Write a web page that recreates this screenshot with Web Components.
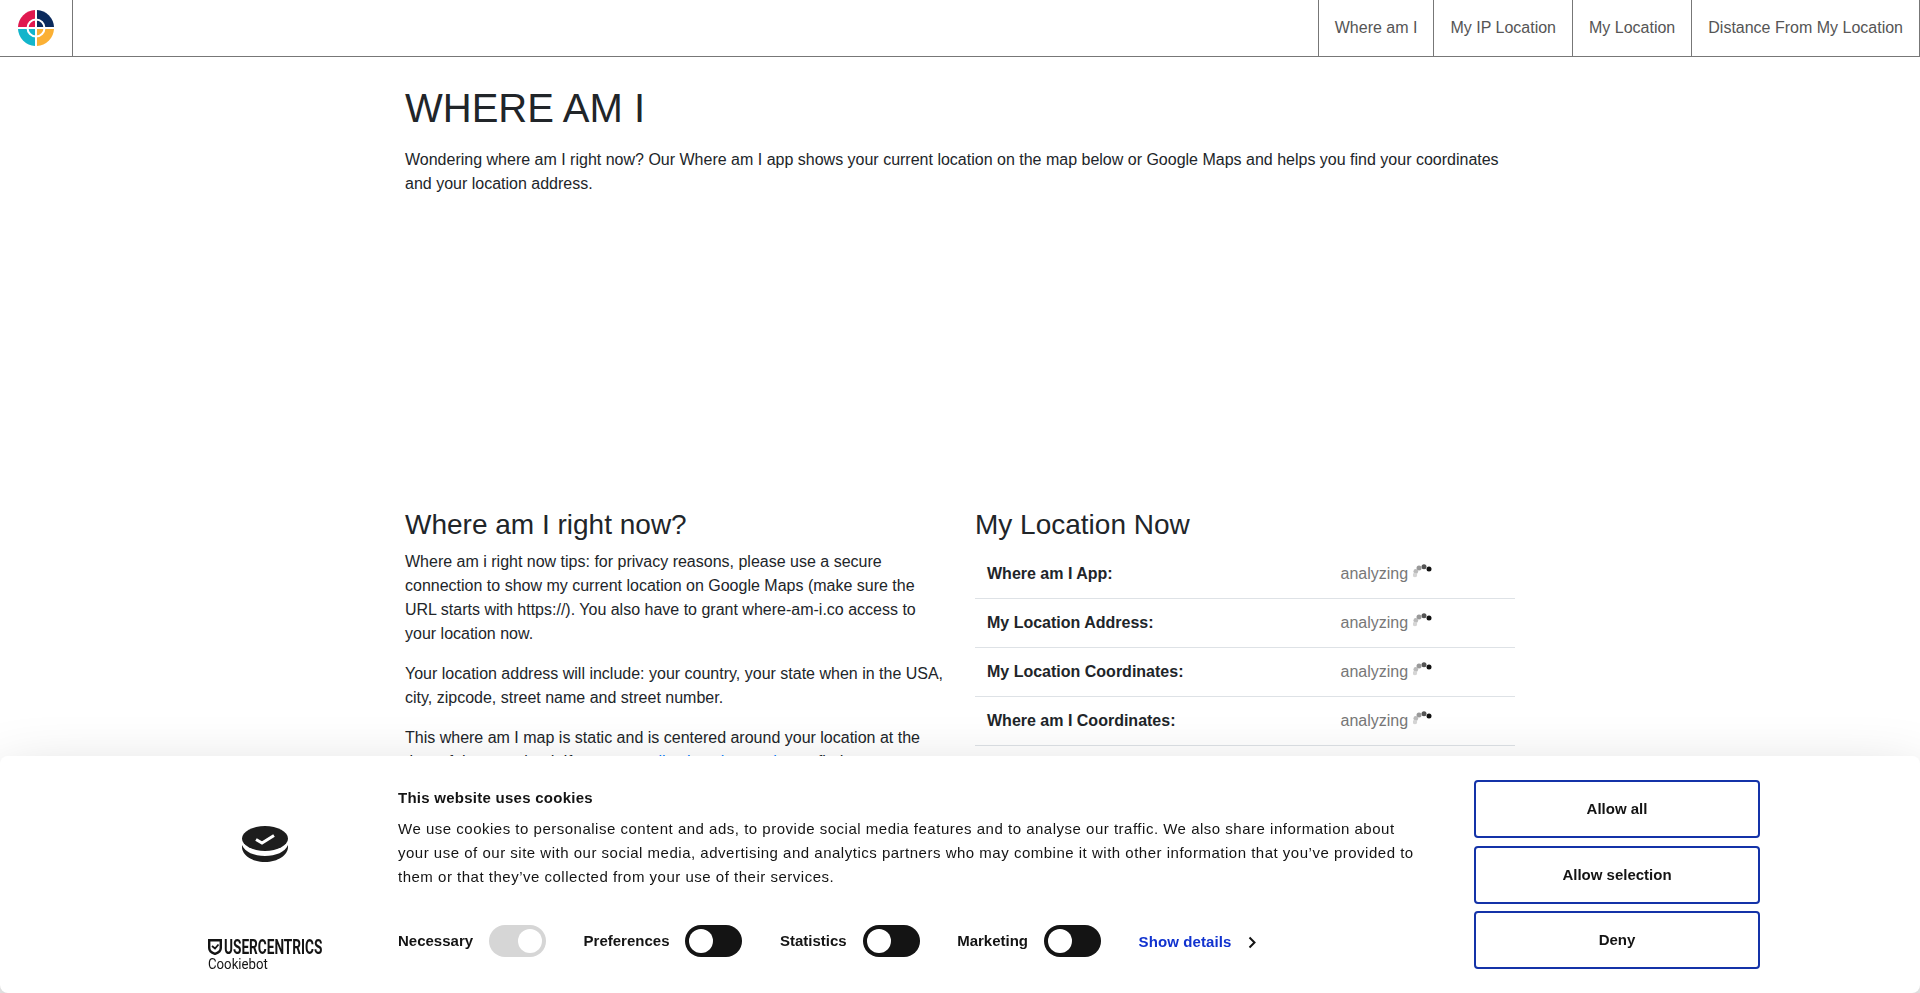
<!DOCTYPE html>
<html lang="en">
<head>
<meta charset="utf-8">
<title>Where am I</title>
<style>
  html, body { margin: 0; background: #fff; }
  body { font: 16px/24px "Liberation Sans", Arial, sans-serif; color: #212529; height: 993px; overflow: hidden; }
</style>
</head>
<body>
<site-nav></site-nav>
<page-main>
  <h1-title slot="title">WHERE AM I</h1-title>
  <span slot="intro">Wondering where am I right now? Our Where am I app shows your current location on the map below or Google Maps and helps you find your coordinates and your location address.</span>
  <tips-col slot="left"></tips-col>
  <location-table slot="right"></location-table>
</page-main>
<cookie-banner></cookie-banner>

<script>
// top bar: logo cell + links on the right
class SiteNav extends HTMLElement {
  constructor() {
    super();
    const links = ['Where am I', 'My IP Location', 'My Location', 'Distance From My Location'];
    this.attachShadow({ mode: 'open' }).innerHTML = `
      <style>
        :host { display: flex; height: 56px; border-bottom: 1px solid #777; box-sizing: content-box; background: #fff; }
        .logo { width: 72px; border-right: 1px solid #777; display: flex; align-items: center; justify-content: center; box-sizing: content-box; }
        svg { display: block; }
        nav { margin-left: auto; display: flex; }
        a { display: flex; align-items: center; padding: 0 16px; color: #555; text-decoration: none; border-left: 1px solid #777; }
        a:last-child { border-right: 1px solid #777; }
      </style>
      <div class="logo">
        <svg width="38" height="38" viewBox="0 0 38 38">
          <path d="M18 1A18 18 0 0 0 1 18H18Z" fill="#e0194f"/>
          <path d="M20 1A18 18 0 0 1 37 18H20Z" fill="#0b2a5c"/>
          <path d="M1 20A18 18 0 0 0 18 37V20Z" fill="#12b5cb"/>
          <path d="M37 20A18 18 0 0 1 20 37V20Z" fill="#fbb034"/>
          <circle cx="19" cy="19" r="8.5" fill="none" stroke="#fff" stroke-width="2"/>
        </svg>
      </div>
      <nav>${links.map(l => `<a href="#">${l}</a>`).join('')}</nav>`;
  }
}
customElements.define('site-nav', SiteNav);

class H1Title extends HTMLElement {
  constructor() {
    super();
    this.attachShadow({ mode: 'open' }).innerHTML = `
      <style>:host { display: block; font-size: 40px; line-height: 48px; margin-bottom: 16px; }</style><slot></slot>`;
  }
}
customElements.define('h1-title', H1Title);

// container, intro, empty ad slot, two columns
class PageMain extends HTMLElement {
  constructor() {
    super();
    this.attachShadow({ mode: 'open' }).innerHTML = `
      <style>
        :host { display: block; width: 1110px; margin: 0 auto; padding-top: 27px; }
        .intro { margin: 0 0 16px; }
        .ad { height: 296px; }
        .cols { display: grid; grid-template-columns: 540px 540px; column-gap: 30px; }
      </style>
      <slot name="title"></slot>
      <p class="intro"><slot name="intro"></slot></p>
      <div class="ad"></div>
      <div class="cols"><slot name="left"></slot><slot name="right"></slot></div>`;
  }
}
customElements.define('page-main', PageMain);

const H2 = `:host { display: block; } h2 { font-size: 28px; line-height: 33.6px; font-weight: 500; margin: 0 0 8px; }`;

class TipsCol extends HTMLElement {
  constructor() {
    super();
    this.attachShadow({ mode: 'open' }).innerHTML = `
      <style>${H2} p { margin: 0 0 16px; } a { color: #007bff; text-decoration: none; }</style>
      <h2>Where am I right now?</h2>
      <p>Where am i right now tips: for privacy reasons, please use a secure connection to show my current location on Google Maps (make sure the URL starts with https://). You also have to grant where-am-i.co access to your location now.</p>
      <p>Your location address will include: your country, your state when in the USA, city, zipcode, street name and street number.</p>
      <p>This where am I map is static and is centered around your location at the<br>time of the page load. If you want a <a href="#">live location tracker</a> to find</p>`;
  }
}
customElements.define('tips-col', TipsCol);

class LocationTable extends HTMLElement {
  constructor() {
    super();
    const rows = ['Where am I App:', 'My Location Address:', 'My Location Coordinates:', 'Where am I Coordinates:'];
    // loading dots, fading from black to pale grey
    const dots = `<svg width="19" height="14" viewBox="0 0 19 14">
      <circle cx="16" cy="5" r="2.5" fill="#111"/>
      <circle cx="11" cy="2.8" r="2.5" fill="#555"/>
      <circle cx="6" cy="4" r="2.5" fill="#999"/>
      <circle cx="2.8" cy="7.5" r="2.4" fill="#bbb"/>
      <circle cx="2" cy="11" r="2.2" fill="#d5d5d5"/></svg>`;
    this.attachShadow({ mode: 'open' }).innerHTML = `
      <style>${H2}
        .row { display: grid; grid-template-columns: 353.5px 1fr; padding: 12px; height: 24px; border-bottom: 1px solid #dee2e6; box-sizing: content-box; }
        b { font-weight: 700; }
        .val { color: #777; display: flex; gap: 5px; }
        svg { margin-top: 2px; }
      </style>
      <h2>My Location Now</h2>
      <div class="rows">${rows.map(r => `<div class="row"><b>${r}</b><span class="val">analyzing ${dots}</span></div>`).join('')}</div>`;
  }
}
customElements.define('location-table', LocationTable);

class ConsentSwitch extends HTMLElement {
  constructor() {
    super();
    const on = this.hasAttribute('on');
    this.attachShadow({ mode: 'open' }).innerHTML = `
      <style>
        :host { display: flex; align-items: center; gap: 16px; font-weight: 700; font-size: 15px; color: #141414; }
        .sw { width: 57px; height: 32px; border-radius: 16px; background: ${on ? '#d6d6d6' : '#141414'}; display: flex; align-items: center; padding: 0 4px; box-sizing: border-box; justify-content: ${on ? 'flex-end' : 'flex-start'}; }
        .sw i { width: 24px; height: 24px; border-radius: 50%; background: #fff; display: block; }
      </style>
      <slot></slot><span class="sw"><i></i></span>`;
  }
}
customElements.define('consent-switch', ConsentSwitch);

class ConsentButton extends HTMLElement {
  constructor() {
    super();
    this.attachShadow({ mode: 'open' }).innerHTML = `
      <style>
        :host { display: flex; align-items: center; justify-content: center; width: 286px; height: 58px; box-sizing: border-box; border: 2px solid #1433a8; border-radius: 4px; font-weight: 700; font-size: 15px; color: #141414; background: #fff; }
      </style><slot></slot>`;
  }
}
customElements.define('consent-button', ConsentButton);

class CookieBanner extends HTMLElement {
  constructor() {
    super();
    this.attachShadow({ mode: 'open' }).innerHTML = `
      <style>
        :host { position: fixed; left: 0; right: 0; bottom: 0; height: 237px; background: #fff; border-radius: 8px; box-shadow: 0 32px 68px rgba(0,0,0,.3); display: grid; grid-template-columns: 398px 1076px 286px; font-family: "Liberation Sans", Arial, sans-serif; color: #141414; }
        .brand { display: flex; flex-direction: column; align-items: flex-start; }
        .coin { margin: 70px 0 0 242px; display: block; }
        .uc { margin-top: 77px; margin-left: 208px; display: flex; align-items: center; height: 16px; gap: 2px; }
        .uc span { font: 700 21px/16px Roboto, sans-serif; display: inline-block; transform: scaleX(.65); transform-origin: left center; white-space: nowrap; color: #141414; }
        .cb { margin: 1px 0 0 208px; font: 15px/16px Roboto, sans-serif; color: #141414; transform: scaleX(.88); transform-origin: left center; }
        .text { padding-top: 30px; }
        h3 { font-size: 15px; line-height: 24px; margin: 0 0 7px; font-weight: 700; letter-spacing: .26px; }
        p { margin: 0; font-size: 15px; line-height: 24px; letter-spacing: .505px; width: 1024px; color: #141414; }
        .switches { display: flex; align-items: center; gap: 37.5px; margin-top: 36px; }
        .more { color: #1032cf; font-weight: 700; font-size: 15px; letter-spacing: .1px; display: flex; align-items: center; gap: 17px; margin-top: 2px; }
        .btns { padding-top: 24px; display: flex; flex-direction: column; gap: 7.5px; }
      </style>
      <div class="brand">
        <svg class="coin" width="46" height="36" viewBox="0 0 46 36">
          <path d="M0 21c0 8 10 15 23 15s23-7 23-15v-2c-3 7-12 11-23 11S3 26 0 19Z" fill="#1d1d1d"/>
          <ellipse cx="23" cy="12.5" rx="23" ry="12.5" fill="#1d1d1d"/>
          <path d="M14 13.5l6 3.5 12-7.5" fill="none" stroke="#fff" stroke-width="3"/>
        </svg>
        <div class="uc">
          <svg width="14" height="16" viewBox="0 0 14 16"><path d="M1.2 1.2h11.6v7.8c0 3-3 5-5.8 5.9-2.8-.9-5.8-2.9-5.8-5.9Z" fill="none" stroke="#141414" stroke-width="2.4"/><path d="M4 7l3 2.5 3.5-4" fill="none" stroke="#141414" stroke-width="1.8"/></svg>
          <span>USERCENTRICS</span>
        </div>
        <div class="cb">Cookiebot</div>
      </div>
      <div class="text">
        <h3>This website uses cookies</h3>
        <p>We use cookies to personalise content and ads, to provide social media features and to analyse our traffic. We also share information about your use of our site with our social media, advertising and analytics partners who may combine it with other information that you’ve provided to them or that they’ve collected from your use of their services.</p>
        <div class="switches">
          <consent-switch on>Necessary</consent-switch>
          <consent-switch>Preferences</consent-switch>
          <consent-switch>Statistics</consent-switch>
          <consent-switch>Marketing</consent-switch>
          <span class="more">Show details
            <svg width="8" height="13" viewBox="0 0 8 13"><path d="M1.5 1.5l5 5-5 5" fill="none" stroke="#141414" stroke-width="2"/></svg>
          </span>
        </div>
      </div>
      <div class="btns">
        <consent-button>Allow all</consent-button>
        <consent-button>Allow selection</consent-button>
        <consent-button>Deny</consent-button>
      </div>`;
  }
}
customElements.define('cookie-banner', CookieBanner);
</script>
</body>
</html>
